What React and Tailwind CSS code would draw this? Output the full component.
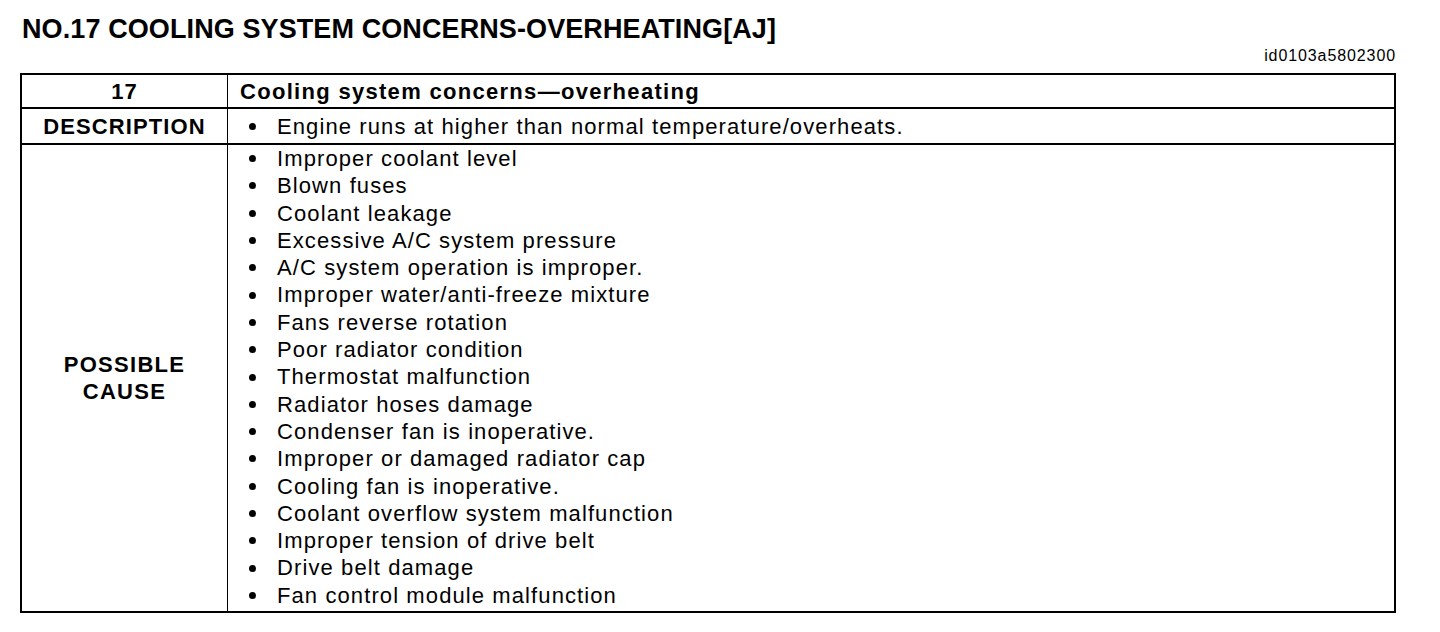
const causes = [
  'Improper coolant level',
  'Blown fuses',
  'Coolant leakage',
  'Excessive A/C system pressure',
  'A/C system operation is improper.',
  'Improper water/anti-freeze mixture',
  'Fans reverse rotation',
  'Poor radiator condition',
  'Thermostat malfunction',
  'Radiator hoses damage',
  'Condenser fan is inoperative.',
  'Improper or damaged radiator cap',
  'Cooling fan is inoperative.',
  'Coolant overflow system malfunction',
  'Improper tension of drive belt',
  'Drive belt damage',
  'Fan control module malfunction',
];

const Bullet = ({ children }) => (
  <li className="flex items-center">
    <span className="w-[28px] shrink-0 flex items-center">
      <span className="w-[7px] h-[7px] rounded-full bg-black" />
    </span>
    <span>{children}</span>
  </li>
);

export default function App() {
  return (
    <div className="w-[1440px] h-[632px] bg-white text-black font-['Liberation_Sans',Arial,sans-serif] overflow-hidden">
      <h1 className="pl-[22px] pt-[14px] text-[27px] leading-[30px] font-bold tracking-[0.1px]">
        NO.17 COOLING SYSTEM CONCERNS-OVERHEATING[AJ]
      </h1>
      <div className="flex justify-end pr-[44px] mt-[4px] text-[16px] leading-[16px] tracking-[0.9px]">id0103a5802300</div>
      <div className="ml-[20px] mt-[9px] w-[1376px] border-[2.5px] border-black grid grid-cols-[206px_1fr] text-[22px] tracking-[1.1px]">
        <div className="h-[34px] flex items-center justify-center font-bold border-r-[1.5px] border-b-2 border-black">17</div>
        <div className="h-[34px] flex items-center pl-[12px] font-bold tracking-[1.3px] border-b-2 border-black">
          Cooling system concerns—overheating
        </div>
        <div className="h-[36px] flex items-center justify-center font-bold tracking-[1.1px] border-r-[1.5px] border-b-2 border-black">DESCRIPTION</div>
        <ul className="h-[36px] flex items-center pl-[21px] border-b-2 border-black">
          <Bullet>Engine runs at higher than normal temperature/overheats.</Bullet>
        </ul>
        <div className="flex items-center justify-center text-center font-bold tracking-[1.3px] leading-[27px] border-r-[1.5px] border-black">
          POSSIBLE<br />CAUSE
        </div>
        <ul className="pl-[21px] pt-0 pb-[2px] leading-[27.3px]">
          {causes.map((c) => (
            <Bullet key={c}>{c}</Bullet>
          ))}
        </ul>
      </div>
    </div>
  );
}
